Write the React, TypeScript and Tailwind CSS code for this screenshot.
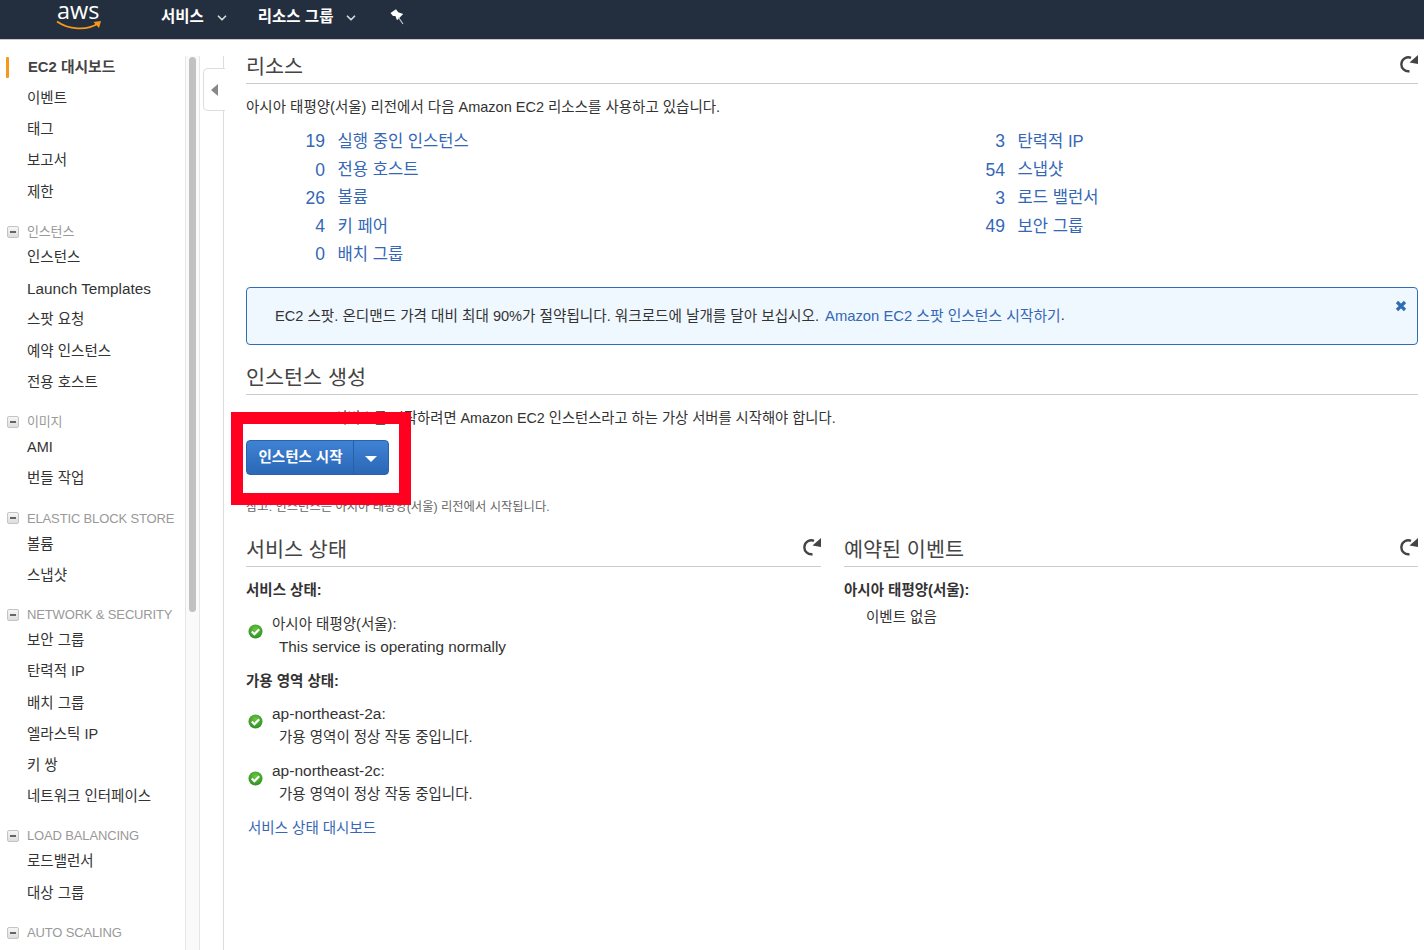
import { ChevronDown } from "lucide-react";

type NavGroup = {
    title?: string;
    items: Array<string>;
}

const navGroups: Array<NavGroup> = [
    { items: ["EC2 대시보드", "이벤트", "태그", "보고서", "제한"] },
    { title: "인스턴스", items: ["인스턴스", "Launch Templates", "스팟 요청", "예약 인스턴스", "전용 호스트"] },
    { title: "이미지", items: ["AMI", "번들 작업"] },
    { title: "ELASTIC BLOCK STORE", items: ["볼륨", "스냅샷"] },
    { title: "NETWORK & SECURITY", items: ["보안 그룹", "탄력적 IP", "배치 그룹", "엘라스틱 IP", "키 쌍", "네트워크 인터페이스"] },
    { title: "LOAD BALANCING", items: ["로드밸런서", "대상 그룹"] },
    { title: "AUTO SCALING", items: [] },
];

const leftResources = [
    ["19", "실행 중인 인스턴스"],
    ["0", "전용 호스트"],
    ["26", "볼륨"],
    ["4", "키 페어"],
    ["0", "배치 그룹"],
];

const rightResources = [
    ["3", "탄력적 IP"],
    ["54", "스냅샷"],
    ["3", "로드 밸런서"],
    ["49", "보안 그룹"],
];

function RefreshIcon() {
    return (
        <svg width="18" height="18" viewBox="0 0 18 18" className="mb-[6px] shrink-0">
            <path d="M9.5 16.2 A7 7 0 1 1 11 2.8" fill="none" stroke="#444" strokeWidth="2.4" />
            <path d="M18 0 L18 9 L9.5 7.5 Z" fill="#444" />
        </svg>
    );
}

function CheckIcon() {
    return (
        <svg width="15" height="15" viewBox="0 0 15 15" className="ml-[1.5px] mt-[10.5px] shrink-0">
            <defs>
                <radialGradient id="okGreen" cx="50%" cy="35%" r="70%">
                    <stop offset="0%" stopColor="#6cc644" />
                    <stop offset="100%" stopColor="#2a8a1f" />
                </radialGradient>
            </defs>
            <circle cx="7.5" cy="7.5" r="7" fill="url(#okGreen)" />
            <path d="M3.8 7.6 L6.4 10.2 L11.2 5.2" fill="none" stroke="#fff" strokeWidth="2.1" />
        </svg>
    );
}

function ResourceList({ rows }: { rows: Array<Array<string>> }) {
    return (
        <div className="flex flex-col">
            {rows.map(([count, name]) => (
                <div key={name} className="flex h-[28.25px] items-center text-[16.6px] text-[#3567b5]">
                    <span className="w-[79px] pb-[2px] text-right text-[17.5px]">{count}</span>
                    <span className="ml-[12.5px]">{name}</span>
                </div>
            ))}
        </div>
    );
}

function SectionTitle({ title, refresh }: { title: string; refresh?: boolean }) {
    return (
        <div className="flex h-[34px] items-center justify-between border-b border-[#cccccc] text-[20.7px] text-[#444444]">
            <span>{title}</span>
            {refresh && <RefreshIcon />}
        </div>
    );
}

function StatusRow({ title, detail, latin }: { title: string; detail: string; latin?: "title" | "detail" }) {
    return (
        <div className="flex items-start">
            <CheckIcon />
            <div className="ml-[9.5px]">
                <div className={latin === "title" ? "h-[22.5px] text-[15.5px] leading-[22.5px]" : "h-[22.5px] leading-[22.5px]"}>{title}</div>
                <div className={latin === "detail" ? "ml-[7px] h-[22.5px] text-[15.3px] leading-[22px]" : "ml-[7px] h-[22.5px] leading-[22.5px]"}>{detail}</div>
            </div>
        </div>
    );
}

export default function App() {
    return (
        <div className="relative h-[950px] w-[1424px] overflow-hidden bg-white text-[14.5px] text-[#333333] [font-family:'Liberation_Sans','Noto_Sans_CJK_KR',sans-serif]">

            {/* Top bar */}
            <div className="flex h-[40px] items-center border-b border-[#c8c8c8] bg-[#232f3e] pb-[6px] text-white">
                <div className="relative ml-[56px] h-[33px] w-[46px] self-start">
                    <span className="absolute left-[1px] top-0 text-[23.5px] leading-[20px] [font-family:'Open_Sans',sans-serif]">aws</span>
                    <svg width="46" height="11" viewBox="0 0 46 11" className="absolute left-0 top-[20px]">
                        <path d="M1 1.5 C12 9.5 31 11 42 3.5" fill="none" stroke="#f7981d" strokeWidth="1.8" />
                        <path d="M37.5 2 L45 1 L43 8 Z" fill="#f7981d" />
                    </svg>
                </div>
                <span className="ml-[59px] text-[15.5px] font-bold">서비스</span>
                <ChevronDown size={14} strokeWidth={3} className="ml-[11px] mt-[2px] text-[#d5d8dc]" />
                <span className="ml-[29px] text-[15.5px] font-bold">리소스 그룹</span>
                <ChevronDown size={14} strokeWidth={3} className="ml-[11px] mt-[2px] text-[#d5d8dc]" />
                <svg width="15" height="16" viewBox="0 0 15 16" className="ml-[32px]">
                    <path d="M0.5 4 L6 0.3 L8.2 3.2 L13.2 5 L7 11.3 L5.4 7 L3 7 Z" fill="#ffffff" />
                    <path d="M8.5 8.5 L13 15" stroke="#d0d0d0" strokeWidth="1.1" />
                </svg>
            </div>

            <div className="flex h-[910px]">
                {/* Sidebar */}
                <nav className="w-[185px] shrink-0 pt-[11.8px] text-[#333333]">
                    {navGroups.map((group, index) => (
                        <div key={group.title ?? "top"} className={index > 0 ? "mt-[12.8px]" : ""}>
                            {group.title && (
                                <div className="flex h-[21px] items-center pl-[7px] text-[13px] tracking-[-0.15px] text-[#999999]">
                                    <span className="flex h-[12px] w-[12px] items-center justify-center rounded-[2px] border border-[#c4c4c4] bg-gradient-to-b from-[#f6f6f6] to-[#dddddd]">
                                        <span className="h-[2px] w-[6px] bg-[#666666]" />
                                    </span>
                                    <span className="ml-[8px] whitespace-nowrap">{group.title}</span>
                                </div>
                            )}
                            {group.items.map((item, itemIndex) => {
                                const active = !group.title && itemIndex === 0;
                                return (
                                    <div key={item} className="flex h-[31.3px] items-center whitespace-nowrap pl-[6px]">
                                        <span className={active ? "h-[21px] w-[3px] rounded-[1px] bg-[#f7981d]" : "h-[21px] w-[3px]"} />
                                        {active && <span className="ml-[19px] text-[14.8px] font-bold text-[#444444]">{item}</span>}
                                        {!active && item === "Launch Templates" && <span className="ml-[18px] text-[15.3px]">{item}</span>}
                                        {!active && item !== "Launch Templates" && <span className="ml-[18px]">{item}</span>}
                                    </div>
                                );
                            })}
                        </div>
                    ))}
                </nav>

                {/* Scroll track and collapse handle */}
                <div className="mt-[16px] flex shrink-0">
                    <div className="w-[15px] border-x border-[#e6e6e6] bg-[#fafafa] px-[3px] pt-[1px]">
                        <div className="h-[555px] rounded-[4px] bg-[#c1c1c1]" />
                    </div>
                    <div className="flex w-[24px] flex-col">
                        <div className="h-[12px] border-r border-[#dddddd]" />
                        <div className="ml-[3px] flex h-[43px] w-[22px] items-center rounded-l-[5px] border-y border-l border-[#dddddd] bg-white pl-[7px]">
                            <span className="h-0 w-0 border-y-[6px] border-r-[7px] border-y-transparent border-r-[#888888]" />
                        </div>
                        <div className="flex-1 border-r border-[#dddddd]" />
                    </div>
                </div>

                {/* Main content */}
                <main className="ml-[22px] w-[1172px] shrink-0 pt-[10px]">
                    <SectionTitle title="리소스" refresh />
                    <p className="mt-[12px] h-[22px] leading-[22px]">아시아 태평양(서울) 리전에서 다음 Amazon EC2 리소스를 사용하고 있습니다.</p>

                    <div className="mt-[10.3px] flex">
                        <div className="w-[680px]"><ResourceList rows={leftResources} /></div>
                        <ResourceList rows={rightResources} />
                    </div>

                    <div className="relative mt-[17.7px] flex h-[58px] items-center rounded-[4px] border border-[#2e6db4] bg-[#f0f8ff] pl-[28px]">
                        <span className="pt-[1px] text-[14.6px]">EC2 스팟. 온디맨드 가격 대비 최대 90%가 절약됩니다. 워크로드에 날개를 달아 보십시오.</span>
                        <span className="ml-[6px] text-[14.8px] text-[#3567b5]">Amazon EC2 스팟 인스턴스 시작하기</span>
                        <span>.</span>
                        <svg width="12" height="12" viewBox="0 0 12 12" className="absolute right-[10px] top-[12px]">
                            <path d="M2 2 L10 10 M10 2 L2 10" stroke="#2e6db4" strokeWidth="3.2" />
                        </svg>
                    </div>

                    <div className="mt-[16px]"><SectionTitle title="인스턴스 생성" /></div>
                    <p className="mt-[12px] h-[22px] text-[14.3px] leading-[22px]">Amazon EC2 서비스를 시작하려면 Amazon EC2 인스턴스라고 하는 가상 서버를 시작해야 합니다.</p>

                    <div className="mt-[11px] flex h-[35px] w-[143px] rounded-[4px] border border-[#2a62ad] bg-gradient-to-b from-[#3f82d4] to-[#2b67b6] font-bold text-white">
                        <span className="flex w-[107px] items-center justify-center border-r border-[#2a5fa5] pl-[1px] pt-[1px]">인스턴스 시작</span>
                        <span className="flex flex-1 items-center justify-center">
                            <span className="mt-[2px] h-0 w-0 border-x-[6px] border-t-[6px] border-x-transparent border-t-white" />
                        </span>
                    </div>

                    <p className="mt-[21px] h-[22px] text-[12.3px] leading-[22px] text-[#666666]">참고: 인스턴스는 아시아 태평양(서울) 리전에서 시작됩니다.</p>

                    <div className="mt-[15px] flex gap-[23px]">
                        <section className="w-[575px]">
                            <SectionTitle title="서비스 상태" refresh />
                            <h3 className="mt-[11.5px] h-[22px] font-bold leading-[22px]">서비스 상태:</h3>
                            <div className="mt-[12.5px]">
                                <StatusRow title="아시아 태평양(서울):" detail="This service is operating normally" latin="detail" />
                            </div>
                            <h3 className="mt-[12px] h-[22px] font-bold leading-[22px]">가용 영역 상태:</h3>
                            <div className="mt-[11px] flex flex-col gap-[12px]">
                                <StatusRow title="ap-northeast-2a:" detail="가용 영역이 정상 작동 중입니다." latin="title" />
                                <StatusRow title="ap-northeast-2c:" detail="가용 영역이 정상 작동 중입니다." latin="title" />
                            </div>
                            <div className="ml-[2px] mt-[12px] h-[22px] leading-[22px] text-[#3567b5]">서비스 상태 대시보드</div>
                        </section>

                        <section className="flex-1">
                            <SectionTitle title="예약된 이벤트" refresh />
                            <h3 className="mt-[11.5px] h-[22px] font-bold leading-[22px]">아시아 태평양(서울):</h3>
                            <p className="ml-[22px] mt-[5.5px] h-[22px] leading-[22px]">이벤트 없음</p>
                        </section>
                    </div>
                </main>
            </div>

            {/* Red annotation box drawn over the page */}
            <div className="absolute left-[231px] top-[412px] h-[93px] w-[180px] border-[12px] border-[#ff0020]" />
        </div>
    );
}
